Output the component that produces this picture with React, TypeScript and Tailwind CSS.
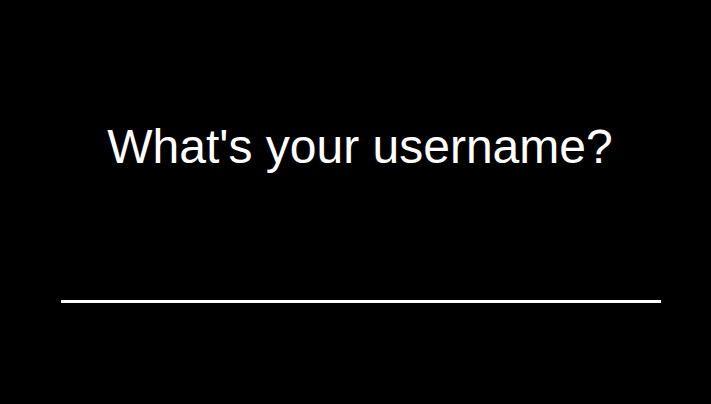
export default function App() {
  return (
    <div className="h-[404px] w-full bg-black flex flex-col pt-[123px] pl-[61px]" style={{ fontFamily: '"Liberation Sans", Arial, sans-serif' }}>
      <div className="w-[600px] flex flex-col items-center">
        <h1 className="text-white text-[48px] leading-[48px] translate-x-[-1px]">What's your username?</h1>
        <input
          type="text"
          className="mt-[129px] w-[600px] bg-transparent text-white outline-none border-b-[3px] border-white h-[1px]"
        />
      </div>
    </div>
  )
}
